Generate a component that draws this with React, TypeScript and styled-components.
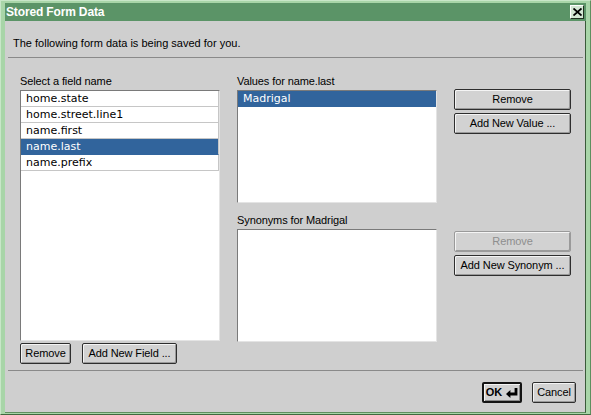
import React from "react";
import styled, { createGlobalStyle, css } from "styled-components";

const Global = createGlobalStyle`
  html, body { margin: 0; padding: 0; background: #a8d5a8; }
  body { width: 591px; height: 415px; overflow: hidden; }
  * { box-sizing: border-box; }
`;

const Window = styled.div`
  width: 591px;
  height: 415px;
  display: flex;
  flex-direction: column;
  background: #a8d5a8;
  border-top: 1px solid #c8e6c8;
  border-left: 1px solid #c8e6c8;
  border-right: 1px solid #5f8f5f;
  border-bottom: 1px solid #3f6a3f;
  padding: 2px 4px 1px 4px;
  font-family: "Liberation Sans", Arial, sans-serif;
  font-size: 11px;
  letter-spacing: -0.1px;
  color: #000;
`;

const TitleBar = styled.div`
  height: 18px;
  flex: none;
  background: #5b9467;
  display: flex;
  align-items: center;
  justify-content: space-between;
  padding: 0 2px 0 1px;
`;

const TitleText = styled.span`
  font-family: "Liberation Sans", Arial, sans-serif;
  font-weight: bold;
  font-size: 12px;
  letter-spacing: -0.15px;
  color: #ffffff;
  line-height: 14px;
`;

const CloseButton = styled.div`
  width: 14px;
  height: 14px;
  background: #d3e6d3;
  border-top: 1px solid #ffffff;
  border-left: 1px solid #ffffff;
  border-right: 1px solid #203020;
  border-bottom: 1px solid #203020;
  display: flex;
  align-items: center;
  justify-content: center;
`;

const Body = styled.div`
  flex: 1;
  background: #cfcfcf;
  border-right: 1px solid #3a5a3a;
  border-bottom: 1px solid #5f8f5f;
  display: flex;
  flex-direction: column;
  padding: 0 2px 0 3px;
`;

const Intro = styled.div`
  margin-top: 16px;
  padding-left: 5px;
  line-height: 13px;
  height: 13px;
  letter-spacing: 0;
`;

const Separator = styled.div<{ $top: number }>`
  height: 1px;
  background: #8a8a8a;
  margin-top: ${(p) => p.$top}px;
`;

const Main = styled.div`
  display: grid;
  grid-template-columns: 200px 200px 117px;
  grid-template-rows: auto auto auto;
  column-gap: 17px;
  padding: 17px 0 0 12px;
`;

const LeftCol = styled.div`
  grid-column: 1;
  grid-row: 1 / span 2;
  display: flex;
  flex-direction: column;
`;

const Section = styled.div<{ $col: number; $row: number; $top?: number }>`
  grid-column: ${(p) => p.$col};
  grid-row: ${(p) => p.$row};
  display: flex;
  flex-direction: column;
  margin-top: ${(p) => p.$top ?? 0}px;
`;

const Label = styled.div`
  line-height: 13px;
  height: 13px;
  margin-bottom: 2px;
  white-space: nowrap;
`;

const ListBox = styled.div<{ $h: number }>`
  height: ${(p) => p.$h}px;
  background: #ffffff;
  border-top: 1px solid #7a7a7a;
  border-left: 1px solid #7a7a7a;
  border-right: 1px solid #e4e4e4;
  border-bottom: 1px solid #e4e4e4;
  display: flex;
  flex-direction: column;
  overflow: hidden;
`;

const ListRow = styled.div<{ $selected?: boolean; $lined?: boolean }>`
  height: 16px;
  line-height: 15px;
  padding-left: 5px;
  white-space: nowrap;
  font-family: "DejaVu Sans", "Liberation Sans", sans-serif;
  font-size: 11px;
  letter-spacing: 0;
  ${(p) =>
    p.$lined &&
    css`
      border-bottom: 1px solid #c6c6c6;
      border-right: 1px solid #c6c6c6;
    `}
  ${(p) =>
    p.$selected &&
    css`
      background: #31649c;
      color: #ffffff;
      border-bottom-color: #31649c;
    `}
`;

const ButtonStack = styled.div<{ $col: number; $row: number; $top: number }>`
  grid-column: ${(p) => p.$col};
  grid-row: ${(p) => p.$row};
  margin-top: ${(p) => p.$top}px;
  display: flex;
  flex-direction: column;
  gap: 3px;
`;

const ButtonRow = styled.div<{ $col: number; $row: number; $top: number }>`
  grid-column: ${(p) => p.$col};
  grid-row: ${(p) => p.$row};
  margin-top: ${(p) => p.$top}px;
  display: flex;
  gap: 11px;
`;

const Button = styled.div<{ $w?: number; $disabled?: boolean; $default?: boolean }>`
  width: ${(p) => (p.$w ? `${p.$w}px` : "100%")};
  height: 21px;
  display: flex;
  align-items: center;
  justify-content: center;
  gap: 4px;
  border: 1px solid #2e2e2e;
  border-radius: 2px;
  background: #d2d2d2;
  box-shadow: inset 1px 1px #f4f4f4, inset -1px -1px #9a9a9a;
  white-space: nowrap;
  line-height: 13px;
  ${(p) =>
    p.$disabled &&
    css`
      color: #8e8e8e;
      border-color: #9a9a9a;
    `}
  ${(p) =>
    p.$default &&
    css`
      border: 2px solid #141414;
      font-weight: bold;
      box-shadow: inset 1px 1px #f4f4f4, inset -1px -1px #8a8a8a;
    `}
`;

const Footer = styled.div`
  display: flex;
  justify-content: flex-end;
  gap: 10px;
  padding: 11px 7px 0 0;
`;

const ReturnIcon = () => (
  <svg width="12" height="10" viewBox="0 0 12 10">
    <path d="M8.6 0h2.8v7.4H4.4V10L0 6l4.4-4v2.6h4.2z" fill="#000" />
  </svg>
);

const fields = ["home.state", "home.street.line1", "name.first", "name.last", "name.prefix"];

export default function App() {
  return (
    <>
      <Global />
      <Window>
        <TitleBar>
          <TitleText>Stored Form Data</TitleText>
          <CloseButton>
            <svg width="9" height="8" viewBox="0 0 9 8">
              <path d="M0.5 0.5L8.5 7.5M8.5 0.5L0.5 7.5" stroke="#000" strokeWidth="1.8" />
            </svg>
          </CloseButton>
        </TitleBar>
        <Body>
          <Intro>The following form data is being saved for you.</Intro>
          <Separator $top={7} />
          <Main>
            <LeftCol>
              <Label>Select a field name</Label>
              <ListBox $h={251}>
                {fields.map((f) => (
                  <ListRow key={f} $lined $selected={f === "name.last"}>
                    {f}
                  </ListRow>
                ))}
              </ListBox>
            </LeftCol>
            <Section $col={2} $row={1}>
              <Label>Values for name.last</Label>
              <ListBox $h={113}>
                <ListRow $selected>Madrigal</ListRow>
              </ListBox>
            </Section>
            <ButtonStack $col={3} $row={1} $top={14}>
              <Button>Remove</Button>
              <Button>Add New Value ...</Button>
            </ButtonStack>
            <Section $col={2} $row={2} $top={11}>
              <Label>Synonyms for Madrigal</Label>
              <ListBox $h={113} />
            </Section>
            <ButtonStack $col={3} $row={2} $top={28}>
              <Button $disabled>Remove</Button>
              <Button>Add New Synonym ...</Button>
            </ButtonStack>
            <ButtonRow $col={1} $row={3} $top={1}>
              <Button $w={51}>Remove</Button>
              <Button $w={95}>Add New Field ...</Button>
            </ButtonRow>
          </Main>
          <Separator $top={6} />
          <Footer>
            <Button $w={40} $default>
              OK
              <ReturnIcon />
            </Button>
            <Button $w={44}>Cancel</Button>
          </Footer>
        </Body>
      </Window>
    </>
  );
}
